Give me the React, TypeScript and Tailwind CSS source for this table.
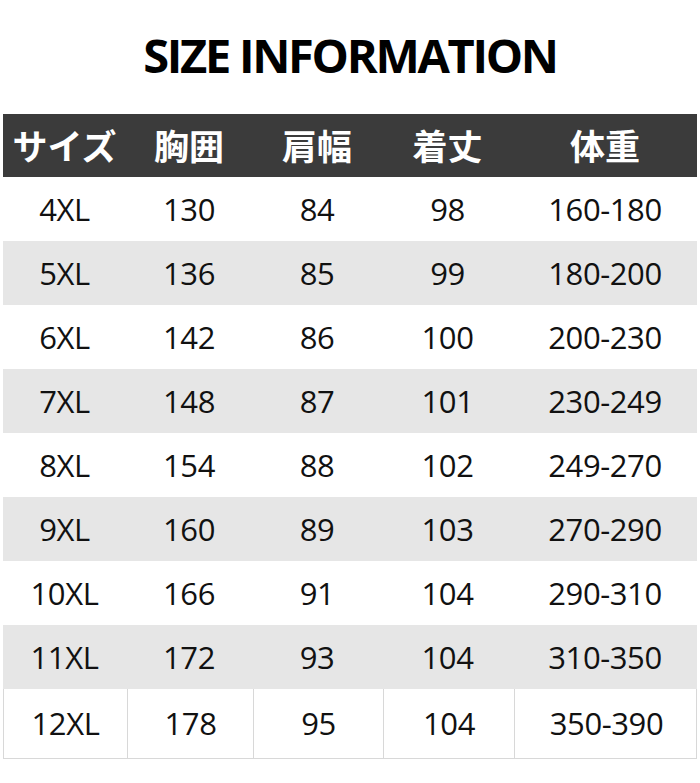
const rows = [
  ["4XL", "130", "84", "98", "160-180"],
  ["5XL", "136", "85", "99", "180-200"],
  ["6XL", "142", "86", "100", "200-230"],
  ["7XL", "148", "87", "101", "230-249"],
  ["8XL", "154", "88", "102", "249-270"],
  ["9XL", "160", "89", "103", "270-290"],
  ["10XL", "166", "91", "104", "290-310"],
  ["11XL", "172", "93", "104", "310-350"],
];

const last = ["12XL", "178", "95", "104", "350-390"];
const cols = "grid grid-cols-[123px_126px_130px_131px_184px]";

export default function App() {
  return (
    <div className="w-[700px] h-[783px] bg-white font-['Open_Sans','Noto_Sans_CJK_JP',sans-serif] text-[#111]">
      {/* タイトル */}
      <div className="h-[114px] flex items-center justify-center pb-[4px]">
        <h1 className="text-[47px] font-bold tracking-[-2.3px] text-black leading-none">SIZE INFORMATION</h1>
      </div>

      <div className="ml-[3px] w-[694px]">
        <div className={`${cols} h-[63px] bg-[#3b3b3b] text-white text-[35px] font-bold items-center text-center font-['Noto_Sans_CJK_JP',sans-serif]`}>
          <div>サイズ</div>
          <div>胸囲</div>
          <div>肩幅</div>
          <div>着丈</div>
          <div>体重</div>
        </div>

        {rows.map((r, i) => (
          <div
            key={r[0]}
            className={`${cols} h-[64px] items-center text-center text-[31px] tracking-[-0.4px] ${i % 2 === 1 ? "bg-[#e6e6e6]" : "bg-white"}`}
          >
            {r.map((c, j) => (
              <div key={j}>{c}</div>
            ))}
          </div>
        ))}

        <div className={`${cols} h-[70px] text-center text-[31px] tracking-[-0.4px] border border-t-0 border-[#d8d8d8]`}>
          {last.map((c, j) => (
            <div key={j} className={`flex items-center justify-center ${j > 0 ? "border-l border-[#d8d8d8]" : ""}`}>
              {c}
            </div>
          ))}
        </div>
      </div>
    </div>
  );
}
